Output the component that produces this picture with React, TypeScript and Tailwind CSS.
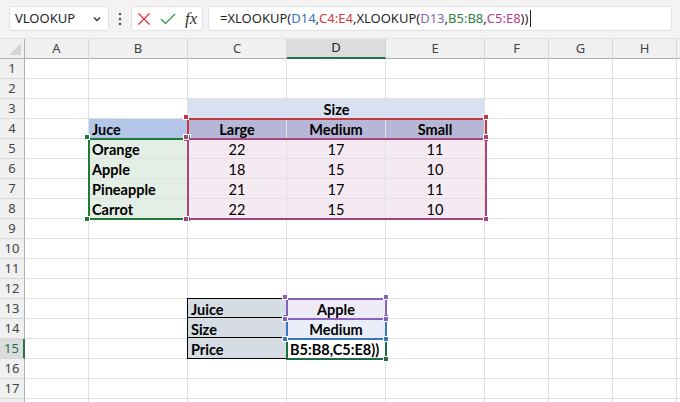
import React from 'react';

const COLS = ['A', 'B', 'C', 'D', 'E', 'F', 'G', 'H'];
const ROWS = Array.from({ length: 18 }, (_, i) => i + 1);

type CellDef = { text?: React.ReactNode; cls?: string };

const bold = 'font-bold';
const center = 'justify-center';

const cells: Record<string, CellDef> = {
  B4: { text: 'Juce', cls: `bg-[#b4c6e7] border-[#b4c6e7] ${bold}` },
  C4: { text: 'Large', cls: `bg-[#b6b7d6] border-[#b6b7d6] ${bold} ${center}` },
  D4: { text: 'Medium', cls: `bg-[#b6b7d6] border-[#b6b7d6] ${bold} ${center}` },
  E4: { text: 'Small', cls: `bg-[#b6b7d6] border-[#b6b7d6] ${bold} ${center}` },
  B5: { text: 'Orange', cls: `bg-[#e3eee4] border-[#d3dbd5] ${bold}` },
  B6: { text: 'Apple', cls: `bg-[#e3eee4] border-[#d3dbd5] ${bold}` },
  B7: { text: 'Pineapple', cls: `bg-[#e3eee4] border-[#d3dbd5] ${bold}` },
  B8: { text: 'Carrot', cls: `bg-[#e3eee4] border-[#d3dbd5] ${bold}` },
  C13: { text: 'Juice', cls: `bg-[#d6dce4] ${bold}` },
  C14: { text: 'Size', cls: `bg-[#d6dce4] ${bold}` },
  C15: { text: 'Price', cls: `bg-[#d6dce4] ${bold}` },
  D13: { text: 'Apple', cls: `bg-[#efebf6] ${bold} ${center}` },
  D14: { text: 'Medium', cls: `bg-[#e9eef8] ${bold} ${center}` },
  D15: { text: 'B5:B8,C5:E8))', cls: `bg-white ${bold}` },
};

const prices = [
  [22, 17, 11],
  [18, 15, 10],
  [21, 17, 11],
  [22, 15, 10],
];
prices.forEach((r, i) => {
  r.forEach((v, j) => {
    cells[`${'CDE'[j]}${i + 5}`] = { text: v, cls: `bg-[#f6eaf2] border-[#dfd3db] ${center}` };
  });
});

function Cell({ id }: { id: string }) {
  const c = cells[id];
  return (
    <div
      className={`flex items-center pt-[3px] px-[3px] border-r border-b border-[#e1e1e1] overflow-hidden whitespace-nowrap ${c?.cls ?? ''}`}
    >
      {c?.text}
    </div>
  );
}

function Sel({
  x, y, w, h, color, handles = 'all',
}: { x: number; y: number; w: number; h: number; color: string; handles?: 'all' | 'br' }) {
  const pts = handles === 'all'
    ? [[0, 0], [w, 0], [0, h], [w, h]]
    : [[w, h]];
  return (
    <div className="absolute pointer-events-none" style={{ left: x, top: y, width: w, height: h }}>
      <div className="absolute inset-0 border-2" style={{ borderColor: color }} />
      {pts.map(([px, py], i) => (
        <div
          key={i}
          className="absolute w-[6px] h-[6px] border border-white"
          style={{ left: px - 4, top: py - 4, backgroundColor: color }}
        />
      ))}
    </div>
  );
}

function FormulaBar() {
  return (
    <div className="h-[39px] bg-[#f3f3f3] border-b border-[#e3e3e3] flex items-start pt-[6px] pl-[9px] pr-[8px] font-['Noto_Sans',sans-serif] text-[13px] text-[#1f1f1f]">
      <div className="w-[100px] h-[25px] bg-white border border-[#e2e2e2] rounded-[3px] flex items-center justify-between pl-[5px] pr-[6px]">
        <span>VLOOKUP</span>
        <svg width="10" height="10" viewBox="0 0 10 10" fill="none" stroke="#333" strokeWidth="1.4">
          <path d="M2 3.5l3 3 3-3" />
        </svg>
      </div>
      <div className="w-[22px] h-[25px] flex items-center justify-center">
        <svg width="4" height="14" viewBox="0 0 4 14" fill="#555">
          <circle cx="2" cy="2" r="1.3" />
          <circle cx="2" cy="7" r="1.3" />
          <circle cx="2" cy="12" r="1.3" />
        </svg>
      </div>
      <div className="w-[72px] h-[25px] bg-white border border-[#e2e2e2] rounded-[3px] flex items-center pl-[5px] gap-[9px]">
        <svg width="14" height="14" viewBox="0 0 14 14" fill="none" stroke="#e0393e" strokeWidth="1.4">
          <path d="M1.5 1.5l11 11M12.5 1.5l-11 11" />
        </svg>
        <svg width="16" height="12" viewBox="0 0 16 12" fill="none" stroke="#3c9c4e" strokeWidth="1.4">
          <path d="M1 6l4.5 4.5L15 1" />
        </svg>
        <span className="font-['Liberation_Serif',serif] italic text-[17px] text-[#333] leading-none">fx</span>
      </div>
      <div className="flex-1 ml-[5px] h-[25px] bg-white border border-[#e2e2e2] rounded-[3px] flex items-center pl-[11px]">
        <span>=XLOOKUP(</span>
        <span className="text-[#2f72c0]">D14</span>
        <span>,</span>
        <span className="text-[#d2383c]">C4:E4</span>
        <span>,XLOOKUP(</span>
        <span className="text-[#8763bd]">D13</span>
        <span>,</span>
        <span className="text-[#2e8040]">B5:B8</span>
        <span>,</span>
        <span className="text-[#bc3a86]">C5:E8</span>
        <span>))</span>
        <span className="ml-[2px] w-px h-[17px] bg-[#222]" />
      </div>
    </div>
  );
}

function Sheet() {
  return (
    <div className="relative">
      <div className="grid grid-cols-[25px_64px_99px_99px_99px_99px_64px_64px_64px_1fr] auto-rows-[20px] font-['Lato',sans-serif] text-[14.5px] text-black">
        {/* header row */}
        <div className="bg-[#f0f0f0] border-r border-b border-[#b0b0b0] relative">
          <svg className="absolute right-[3px] bottom-[3px]" width="12" height="12" viewBox="0 0 12 12">
            <path d="M12 0V12H0Z" fill="#d4d4d4" />
          </svg>
        </div>
        {COLS.map((c) => (
          <div
            key={c}
            className={
              c === 'D'
                ? "flex items-center justify-center bg-[#dcdcdc] border-r border-[#d0d0d0] border-b-2 border-b-[#217346] text-[#222] text-[13px] font-['Noto_Sans',sans-serif]"
                : "flex items-center justify-center bg-[#f0f0f0] border-r border-[#d8d8d8] border-b border-b-[#b0b0b0] text-[#444] text-[13px] font-['Noto_Sans',sans-serif]"
            }
          >
            {c}
          </div>
        ))}
        <div className="bg-[#f0f0f0] border-b border-[#b0b0b0]" />

        {ROWS.map((r) => (
          <React.Fragment key={r}>
            <div
              className={
                r === 15
                  ? "flex items-center justify-center pt-[1px] bg-[#dcdcdc] border-b border-[#d8d8d8] border-r-2 border-r-[#217346] text-[#217346] text-[13px] font-['Noto_Sans',sans-serif]"
                  : "flex items-center justify-center pt-[1px] bg-[#f0f0f0] border-b border-[#d8d8d8] border-r border-r-[#b0b0b0] text-[#444] text-[13px] font-['Noto_Sans',sans-serif]"
              }
            >
              {r < 18 ? r : null}
            </div>
            {r === 3 ? (
              <>
                <Cell id="A3" />
                <Cell id="B3" />
                <div className="col-span-3 flex items-center justify-center pt-[3px] bg-[#d9e0f1] border-b border-[#d9e0f1] font-bold">
                  Size
                </div>
                <Cell id="F3" />
                <Cell id="G3" />
                <Cell id="H3" />
              </>
            ) : (
              COLS.map((c) => <Cell key={c} id={`${c}${r}`} />)
            )}
            <div className="border-b border-[#e1e1e1]" />
          </React.Fragment>
        ))}
      </div>

      {/* black borders around C13:C15 */}
      <div className="absolute left-[187px] top-[259px] w-[101px] h-[61px] border border-black pointer-events-none">
        <div className="h-[19px] border-b border-black" />
        <div className="h-[20px] border-b border-black" />
      </div>

      <Sel x={187} y={79} w={300} h={22} color="#c2393e" />
      <Sel x={88} y={99} w={101} h={82} color="#1f7a35" />
      <Sel x={187} y={99} w={300} h={82} color="#a8437f" />
      <Sel x={286} y={299} w={101} h={22} color="#1f6e43" handles="br" />
      <Sel x={286} y={279} w={101} h={22} color="#3a75c4" />
      <Sel x={286} y={259} w={101} h={22} color="#8662bd" />
    </div>
  );
}

export default function App() {
  return (
    <div className="w-[680px] h-[402px] overflow-hidden bg-white">
      <FormulaBar />
      <Sheet />
    </div>
  );
}
